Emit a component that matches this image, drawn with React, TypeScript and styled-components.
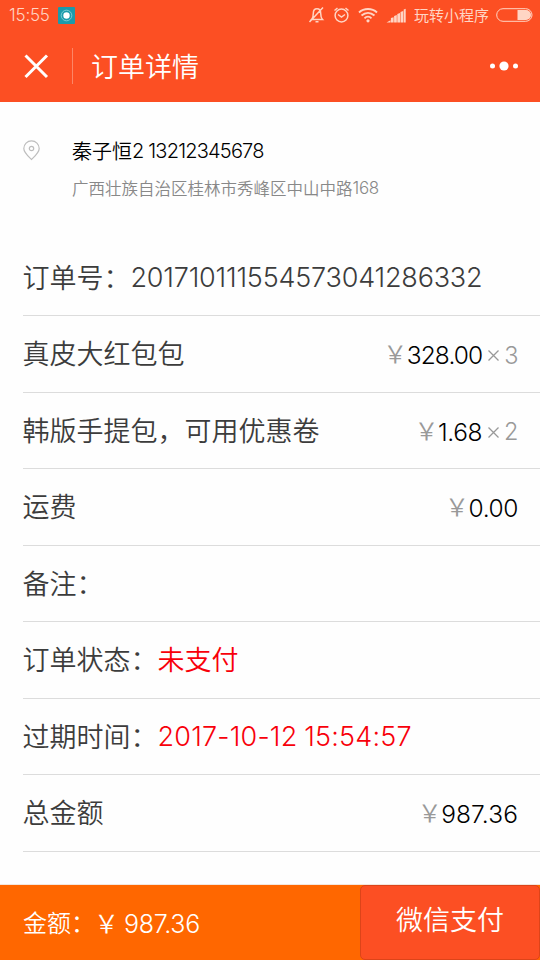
import React from "react";
import styled, { createGlobalStyle } from "styled-components";

const GlobalStyle = createGlobalStyle`
  * { box-sizing: border-box; }
  body {
    margin: 0;
    background: #fff;
    font-family: "Noto Sans CJK SC", sans-serif;
    font-weight: 350;
  }
`;

const Page = styled.main`
  width: 540px;
  height: 960px;
  display: flex;
  flex-direction: column;
  overflow: hidden;
  background: #fefefe;
`;

const Digits = styled.span<{ $size: number; $spacing?: number; $weight?: number }>`
  font-family: Inter, sans-serif;
  font-size: ${(p) => p.$size}px;
  font-weight: ${(p) => p.$weight ?? 300};
  letter-spacing: ${(p) => p.$spacing ?? 0}px;
  line-height: 1;
  white-space: pre;
`;

const Header = styled.header`
  height: 102px;
  background: #fc4f23;
  color: #fff;
`;

const StatusBar = styled.div`
  height: 30px;
  padding: 0 7px 0 9px;
  display: flex;
  align-items: center;
  color: #ffd5c4;
  svg { display: block; flex: none; }
`;

const AppBadge = styled.svg`
  margin-left: 8px;
`;

const StatusIcons = styled.div`
  margin-left: auto;
  display: flex;
  align-items: center;
`;

const Carrier = styled.span`
  margin: 0 7px 0 8px;
  font-size: 15px;
  line-height: 20px;
  font-weight: 400;
`;

const NavBar = styled.nav`
  height: 72px;
  padding: 0 21px 0 24px;
  display: flex;
  align-items: center;
`;

const NavDivider = styled.span`
  width: 1px;
  height: 36px;
  margin: 0 18px 0 23px;
  background: #fd8666;
`;

const Title = styled.h1`
  margin: 0;
  flex: 1;
  font-size: 27px;
  line-height: 40px;
  font-weight: 350;
`;

const Address = styled.section`
  height: 138px;
  padding: 36px 0 0 23px;
  display: flex;
  align-items: flex-start;
  svg { margin-top: 2px; }
`;

const AddressText = styled.div`
  margin-left: 31px;
  display: flex;
  flex-direction: column;
`;

const Recipient = styled.div`
  display: flex;
  align-items: center;
  height: 25px;
  font-size: 20px;
  color: #000;
`;

const Street = styled.div`
  display: flex;
  align-items: center;
  height: 24px;
  margin-top: 13px;
  font-size: 16.5px;
  color: #888;
`;

const Rows = styled.section`
  height: 644px;
  padding-left: 23px;
`;

const Row = styled.div`
  height: 77px;
  padding-right: 22px;
  display: flex;
  align-items: center;
  border-bottom: 1px solid #dcdcdc;
  font-size: 27px;
  line-height: 40px;
  color: #3c3c3c;
  &:nth-child(odd) { height: 76px; }
`;

const Label = styled.span`
  margin-left: -0.5px;
  padding-bottom: 2px;
  white-space: nowrap;
`;

const Alert = styled.span`
  display: flex;
  align-items: center;
  padding-bottom: 2px;
  color: #f8000a;
`;

const DateTime = styled(Digits)`
  padding-top: 2px;
  word-spacing: -1px;
`;

const Price = styled.span`
  margin-left: auto;
  padding-top: 3px;
  display: flex;
  align-items: center;
  color: #000;
`;

const Muted = styled.span`
  display: flex;
  align-items: center;
  color: #999;
  svg { display: block; }
`;

const Yen = styled.span<{ $size: number }>`
  width: 15px;
  display: flex;
  justify-content: center;
  font-size: ${(p) => p.$size}px;
  line-height: 30px;
  padding-bottom: 3px;
`;

const Currency = styled(Muted)`
  margin-right: 4px;
  padding-bottom: 2px;
`;

const Times = styled.svg`
  margin: 0 5px 0 6px;
`;

const Footer = styled.footer`
  height: 76px;
  display: flex;
  border-top: 1px solid #f3e6dd;
  background: #ff6700;
  color: #fff;
`;

const Total = styled.div`
  flex: 1;
  padding: 2px 0 0 23px;
  display: flex;
  align-items: center;
  font-size: 24px;
`;

const TotalLabel = styled.span`
  margin-right: 4px;
  line-height: 36px;
  padding-bottom: 3px;
`;

const TotalValue = styled(Digits)`
  margin-left: 10px;
  padding-top: 1px;
`;

const PayButton = styled.button`
  width: 180px;
  height: 75px;
  padding: 0 0 7px;
  border: 1px solid #dc4419;
  border-radius: 5px;
  background: #fc4f23;
  color: #fff;
  font: 350 27px/40px "Noto Sans CJK SC", sans-serif;
`;

const Amount = ({ value, count, spacing = -0.4 }: { value: string; count?: string; spacing?: number }) => (
  <Price>
    <Currency><Yen $size={24}>￥</Yen></Currency>
    <Digits $size={24.5} $spacing={spacing} $weight={350}>{value}</Digits>
    {count && (
      <Muted>
        <Times width="11" height="11" viewBox="0 0 11 11" fill="none" stroke="currentColor" strokeWidth="1.3">
          <path d="m.5.5 10 10M10.500.5l-10 10" />
        </Times>
        <Digits $size={23.5} $spacing={-0.5}>{count}</Digits>
      </Muted>
    )}
  </Price>
);

export default function App() {
  return (
    <Page>
      <GlobalStyle />
      <Header>
        <StatusBar>
          <Digits $size={17} $spacing={-0.2}>15:55</Digits>
          <AppBadge width="17" height="17" viewBox="0 0 17 17">
            <rect width="17" height="17" rx="1" fill="#1c9aaa" />
            <circle cx="8.500" cy="8.500" r="5.300" fill="none" stroke="#8fd6dc" strokeWidth=".8" />
            <circle cx="8.500" cy="8.500" r="3.200" fill="#fff" />
          </AppBadge>
          <StatusIcons>
            <svg width="100" height="20" viewBox="0 0 100 20" fill="none" stroke="currentColor" strokeWidth="1.500">
              <path d="M5.500 14.500h11c-1.800-1.700-1.800-3-1.800-6 0-3-1.500-4.700-3.700-4.700s-3.700 1.700-3.700 4.700c0 3 0 4.300-1.800 6ZM9.500 16.700h3M3.500 17 17 2.500" />
              <circle cx="35.500" cy="10.500" r="6.400" />
              <path d="m32 9.500 3.500 2.500 3.500-2.500M28.500 5.500 31.500 3M39.500 3l3 2.500" />
              <path d="M53 7.500c5-4.600 13-4.600 18 0M55.500 10.500c4-3.500 9-3.500 13 0M58.500 13.300c2-2 5-2 7 0" strokeWidth="1.900" />
              <circle cx="62" cy="15.800" r="1.600" fill="currentColor" stroke="none" />
              <path d="M80.500 17.500h4v-2.300Zm4.400 0v-4.500l2.700-.7v5.200Zm3.200 0v-6.500l2.700-1v7.500Zm3.200 0V9l2.700-1v9.500Zm3.200 0V7l2.700-1v11.500Zm3.200 0V4.500l2-.7v13.700Z" fill="currentColor" stroke="none" />
            </svg>
            <Carrier>玩转小程序</Carrier>
            <svg width="37" height="14" viewBox="0 0 37 14" fill="none">
              <rect x=".7" y=".7" width="35.300" height="12.600" rx="6.300" stroke="currentColor" />
              <path d="M21.500 2h8.500a5 5 0 0 1 0 10h-8.500Z" fill="currentColor" />
            </svg>
          </StatusIcons>
        </StatusBar>
        <NavBar>
          <svg width="25" height="25" viewBox="0 0 25 25" stroke="#fff" strokeWidth="3">
            <path d="m1.500 1.500 21.500 21.500M23 1.500l-21.500 21.500" />
          </svg>
          <NavDivider />
          <Title>订单详情</Title>
          <svg width="29" height="10" viewBox="0 0 29 10" fill="#fff">
            <circle cx="2.500" cy="5" r="2.500" />
            <circle cx="14" cy="5" r="4.600" />
            <circle cx="25.500" cy="5" r="2.500" />
          </svg>
        </NavBar>
      </Header>
      <Address>
        <svg width="18" height="21" viewBox="0 0 18 21" fill="none" stroke="#bdbdbd" strokeWidth="1.200">
          <path d="M8.500 19.500C5 16 .8 12.500.8 8.500a7.700 7.700 0 0 1 15.400 0c0 4-4.200 7.500-7.700 11Z" />
          <circle cx="8.500" cy="8.500" r="2.200" />
        </svg>
        <AddressText>
          <Recipient>
            秦子恒<Digits $size={20} $spacing={-0.8}>2 13212345678</Digits>
          </Recipient>
          <Street>
            广西壮族自治区桂林市秀峰区中山中路<Digits $size={17} $spacing={-0.3}>168</Digits>
          </Street>
        </AddressText>
      </Address>
      <Rows>
        <Row><Label>订单号：</Label><Digits $size={27} $spacing={-0.2}>201710111554573041286332</Digits></Row>
        <Row><Label>真皮大红包包</Label><Amount value="328.00" count="3" spacing={-0.9} /></Row>
        <Row><Label>韩版手提包，可用优惠卷</Label><Amount value="1.68" count="2" /></Row>
        <Row><Label>运费</Label><Amount value="0.00" /></Row>
        <Row><Label>备注：</Label></Row>
        <Row><Label>订单状态：</Label><Alert>未支付</Alert></Row>
        <Row><Label>过期时间：</Label><Alert><DateTime $size={27} $spacing={0.2}>2017-10-12 15:54:57</DateTime></Alert></Row>
        <Row><Label>总金额</Label><Amount value="987.36" spacing={0.1} /></Row>
      </Rows>
      <Footer>
        <Total>
          <TotalLabel>金额：</TotalLabel>
          <Yen $size={25}>￥</Yen>
          <TotalValue $size={25} $spacing={-0.3}>987.36</TotalValue>
        </Total>
        <PayButton>微信支付</PayButton>
      </Footer>
    </Page>
  );
}
